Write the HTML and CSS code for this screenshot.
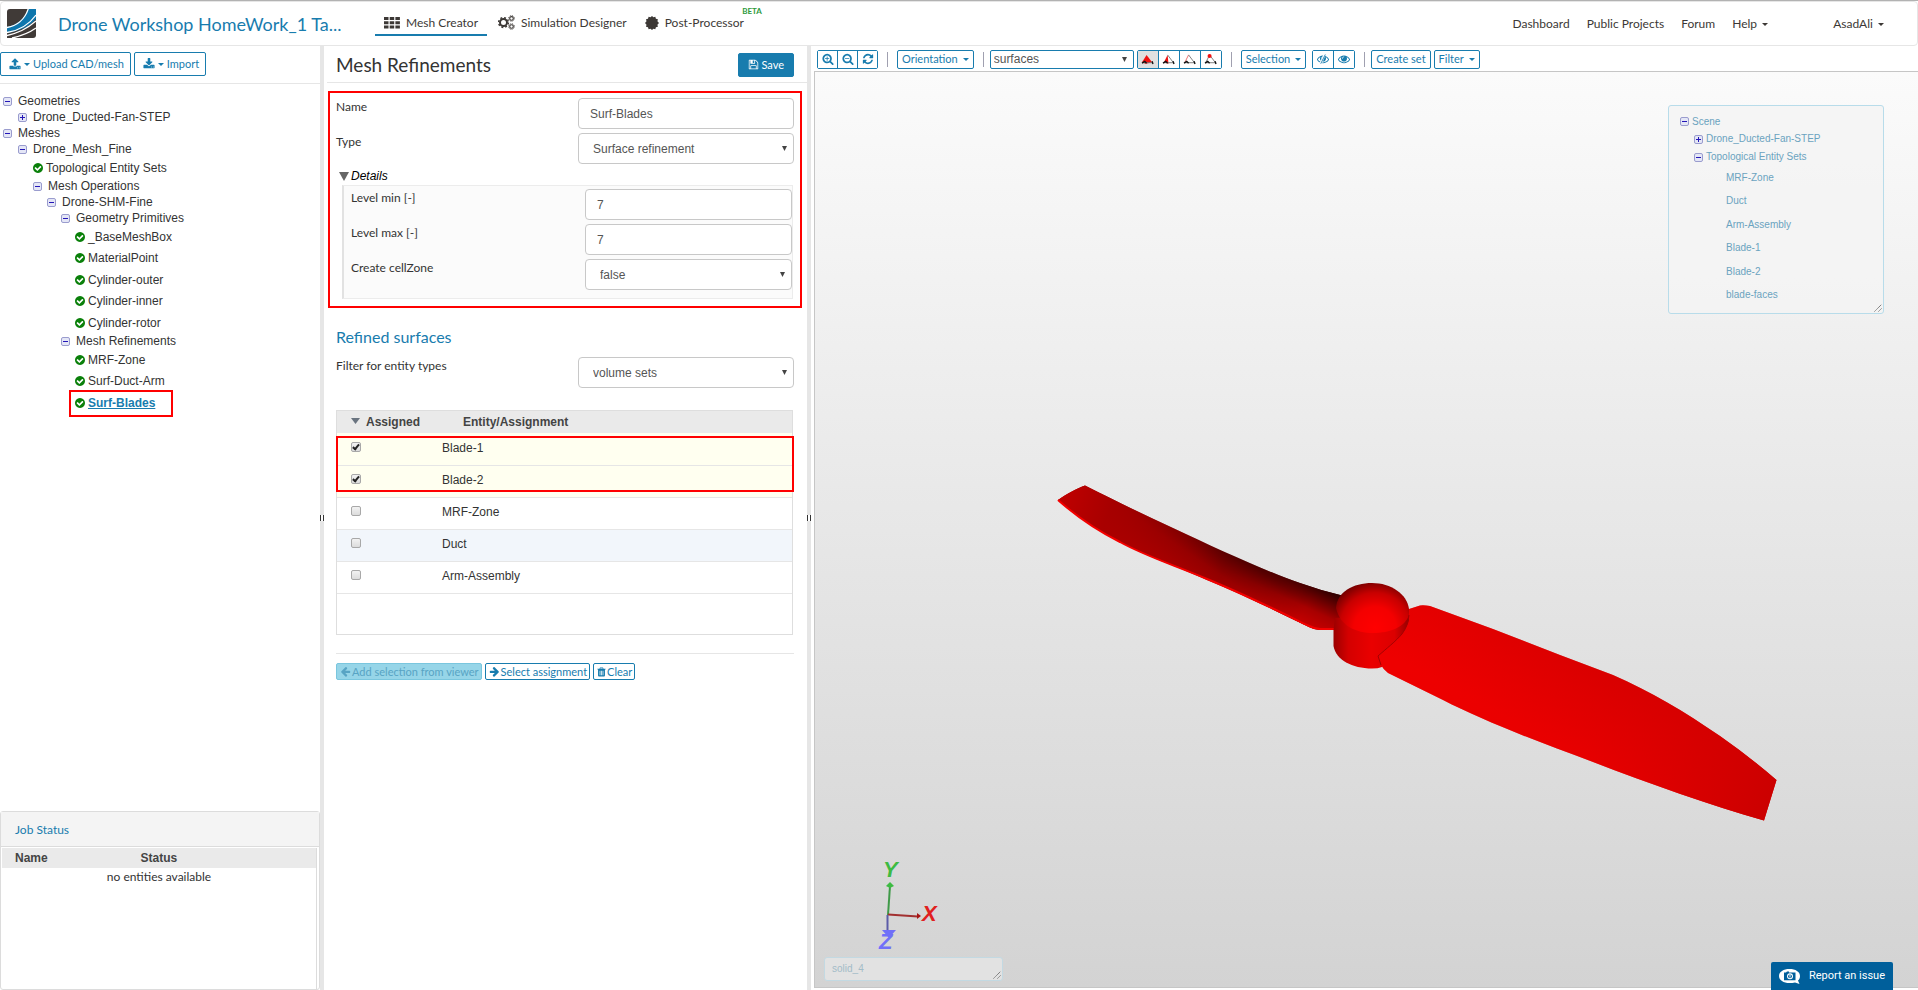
FILE: index.html
```
<!DOCTYPE html>
<html lang="en">
<head>
<meta charset="utf-8">
<title>Drone Workshop HomeWork_1 - Mesh Creator</title>
<link rel="stylesheet" href="styles.css">
</head>
<body>
<svg class="defs" aria-hidden="true">
  <defs>
    <symbol id="i-upload" viewBox="0 0 1792 1792"><path d="M1344 1472q0-26-19-45t-45-19-45 19-19 45 19 45 45 19 45-19 19-45zm256 0q0-26-19-45t-45-19-45 19-19 45 19 45 45 19 45-19 19-45zm128-224v320q0 40-28 68t-68 28h-1472q-40 0-68-28t-28-68v-320q0-40 28-68t68-28h427q21 56 70.5 92t110.5 36h256q61 0 110.5-36t70.5-92h427q40 0 68 28t28 68zm-325-648q-17 40-59 40h-256v448q0 26-19 45t-45 19h-256q-26 0-45-19t-19-45v-448h-256q-42 0-59-40-17-39 14-69l448-448q18-19 45-19t45 19l448 448q31 30 14 69z"/></symbol>
    <symbol id="i-download" viewBox="0 0 1792 1792"><path d="M1344 1344q0-26-19-45t-45-19-45 19-19 45 19 45 45 19 45-19 19-45zm256 0q0-26-19-45t-45-19-45 19-19 45 19 45 45 19 45-19 19-45zm128-224v320q0 40-28 68t-68 28h-1472q-40 0-68-28t-28-68v-320q0-40 28-68t68-28h465l135 136q58 56 136 56t136-56l136-136h464q40 0 68 28t28 68zm-325-569q17 41-14 70l-448 448q-18 19-45 19t-45-19l-448-448q-31-29-14-70 17-39 59-39h256v-448q0-26 19-45t45-19h256q26 0 45 19t19 45v448h256q42 0 59 39z"/></symbol>
    <symbol id="i-save" viewBox="0 0 1792 1792"><path d="M512 1536h768v-384h-768v384zm896 0h128v-896q0-14-10-38.5t-20-34.5l-281-281q-10-10-34-20t-39-10v416q0 40-28 68t-68 28h-576q-40 0-68-28t-28-68v-416h-128v1280h128v-416q0-40 28-68t68-28h832q40 0 68 28t28 68v416zm-384-928v-320q0-13-9.5-22.5t-22.5-9.5h-192q-13 0-22.5 9.5t-9.5 22.5v320q0 13 9.5 22.5t22.5 9.5h192q13 0 22.5-9.5t9.5-22.5zm640 32v928q0 40-28 68t-68 28h-1344q-40 0-68-28t-28-68v-1344q0-40 28-68t68-28h928q40 0 88 20t76 48l280 280q28 28 48 76t20 88z"/></symbol>
    <symbol id="i-check" viewBox="128 128 1536 1536"><path d="M1412 734q0-28-18-46l-91-90q-19-19-45-19t-45 19l-408 407-226-226q-19-19-45-19t-45 19l-91 90q-18 18-18 46 0 27 18 45l362 362q19 19 45 19 27 0 46-19l543-543q18-18 18-45zm252 162q0 209-103 385.5t-279.5 279.5-385.5 103-385.5-103-279.5-279.5-103-385.5 103-385.5 279.5-279.5 385.5-103 385.5 103 279.5 279.5 103 385.5z"/></symbol>
    <symbol id="i-arrow" viewBox="0 0 1792 1792"><path d="M1600 960q0 54-37 91l-651 651q-39 37-91 37-51 0-90-37l-75-75q-38-38-38-91t38-91l293-293h-704q-52 0-84.5-37.5t-32.5-90.5v-128q0-53 32.5-90.5t84.5-37.5h704l-293-294q-38-36-38-90t38-90l75-75q38-38 90-38 53 0 91 38l651 651q37 35 37 90z"/></symbol>
    <symbol id="i-trash" viewBox="0 0 12 12"><path fill-rule="evenodd" d="M4 0h4l.7 1.6H11.5v1.1H10.6V10.6a1.3 1.3 0 0 1-1.3 1.4H2.7A1.3 1.3 0 0 1 1.4 10.6V2.7H.5V1.6H3.3zM4.3 1.6h3.400L7.400.9H4.600zM3.500 4.200v6h1v-6zM5.500 4.200v6h1v-6zM7.500 4.200v6h1v-6z"/></symbol>
    <symbol id="i-zoom-in" viewBox="0 0 1792 1792"><path d="M1088 800v64q0 13-9.5 22.5t-22.5 9.500h-224v224q0 13-9.500 22.500t-22.500 9.500h-64q-13 0-22.500-9.500t-9.500-22.500v-224h-224q-13 0-22.500-9.500t-9.500-22.500v-64q0-13 9.500-22.500t22.500-9.500h224v-224q0-13 9.500-22.500t22.500-9.500h64q13 0 22.500 9.500t9.500 22.500v224h224q13 0 22.500 9.500t9.500 22.500zm128 32q0-185-131.500-316.500t-316.500-131.500-316.500 131.500-131.500 316.500 131.500 316.500 316.500 131.500 316.500-131.500 131.500-316.500zm512 832q0 53-37.500 90.500t-90.500 37.500q-54 0-90-38l-343-342q-179 124-399 124-143 0-273.500-55.500t-225-150-150-225-55.500-273.500 55.500-273.500 150-225 225-150 273.500-55.500 273.500 55.500 225 150 150 225 55.500 273.500q0 220-124 399l343 343q37 37 37 90z"/></symbol>
    <symbol id="i-zoom-out" viewBox="0 0 1792 1792"><path d="M1088 800v64q0 13-9.500 22.500t-22.500 9.500h-576q-13 0-22.500-9.500t-9.500-22.500v-64q0-13 9.500-22.500t22.500-9.500h576q13 0 22.500 9.500t9.500 22.500zm128 32q0-185-131.500-316.500t-316.500-131.500-316.500 131.500-131.500 316.500 131.500 316.500 316.500 131.500 316.500-131.500 131.500-316.500zm512 832q0 53-37.500 90.500t-90.500 37.500q-54 0-90-38l-343-342q-179 124-399 124-143 0-273.500-55.500t-225-150-150-225-55.500-273.500 55.500-273.500 150-225 225-150 273.500-55.500 273.500 55.500 225 150 150 225 55.500 273.500q0 220-124 399l343 343q37 37 37 90z"/></symbol>
    <symbol id="i-refresh" viewBox="0 0 1792 1792"><path d="M1639 1056q0 5-1 7-64 268-268 434.500t-478 166.500q-146 0-282.500-55t-243.500-157l-129 129q-19 19-45 19t-45-19-19-45v-448q0-26 19-45t45-19h448q26 0 45 19t19 45-19 45l-137 137q71 66 161 102t187 36q134 0 250-65t186-179q11-17 53-117 8-23 30-23h192q13 0 22.500 9.500t9.500 22.500zm25-800v448q0 26-19 45t-45 19h-448q-26 0-45-19t-19-45 19-45l138-138q-148-137-349-137-134 0-250 65t-186 179q-11 17-53 117-8 23-30 23h-199q-13 0-22.500-9.500t-9.500-22.500v-7q65-268 270-434.500t480-166.500q146 0 284 55.500t245 156.500l130-129q19-19 45-19t45 19 19 45z"/></symbol>
    <symbol id="i-eye" viewBox="0 0 1792 1792"><path d="M1664 960q-152-236-381-353 61 104 61 225 0 185-131.500 316.500t-316.500 131.500-316.500-131.500-131.500-316.500q0-121 61-225-229 117-381 353 133 205 333.500 326.500t434.500 121.500 434.500-121.500 333.500-326.500zm-720-384q0-20-14-34t-34-14q-125 0-214.500 89.500t-89.500 214.500q0 20 14 34t34 14 34-14 14-34q0-86 61-147t147-61q20 0 34-14t14-34zm848 384q0 34-20 69-140 230-376.500 368.500t-499.500 138.500-499.500-139-376.500-368q-20-35-20-69t20-69q140-229 376.500-368t499.500-139 499.500 139 376.500 368q20 35 20 69z"/></symbol>
    <symbol id="i-eye-off" viewBox="0 0 1792 1792"><use href="#i-eye" width="1792" height="1792"/><path d="M1180 150L520 1640" stroke="#fff" stroke-width="340" fill="none"/><path d="M1240 220L560 1600" stroke="currentColor" stroke-width="130" fill="none"/></symbol>
    <symbol id="i-minus" viewBox="0 0 9 9"><rect x=".5" y=".5" width="8" height="8" rx="1.500" fill="#e4e6f6" stroke="#9a9cce"/><path d="M2 4.500h5" stroke="#2416b8"/></symbol>
    <symbol id="i-plus" viewBox="0 0 9 9"><rect x=".5" y=".5" width="8" height="8" rx="1.500" fill="#e4e6f6" stroke="#9a9cce"/><path d="M2 4.500h5M4.500 2v5" stroke="#2416b8"/></symbol>
    <symbol id="i-caret" viewBox="0 0 6 3"><path d="M0 0h6L3 3z"/></symbol>
    <symbol id="i-drop" viewBox="0 0 6 5" preserveAspectRatio="none"><path d="M0 0h6L3 5z"/></symbol>
    <symbol id="i-grip" viewBox="0 0 8 8"><path d="M.5 7.500l7-7M4.500 7.500l3-3" stroke="#6a6a6a" stroke-dasharray="1.200 .4" fill="none"/></symbol>
    <symbol id="i-tetra" viewBox="0 0 14 12"><path d="M1.500 9.500h11" stroke="#777" stroke-width="1"/><path d="M1 10l3-2 2 2M12 8l1 3" stroke="#111" stroke-width="1.500" fill="none"/></symbol>
  </defs>
</svg>

<header class="topbar">
  <svg class="logo" viewBox="0 0 29 29">
    <defs><clipPath id="logo-clip"><path d="M3 0h26v26a3 3 0 0 1-3 3H0V3a3 3 0 0 1 3-3z"/></clipPath></defs>
    <g clip-path="url(#logo-clip)">
      <rect width="29" height="29" fill="#403a37"/>
      <path d="M0 18C9 16 17 11 21 0H29V10C22 18 12 22 0 24z" fill="#0d76ad"/>
      <path d="M0 18.500C9 17 18 11 21.500-1M0 23.500C12 21.500 22 16 29 6M0 26.500C12 24 20 20 29 12M5 29C14 27 22 24 29 19" stroke="#fff" stroke-width="1.300" fill="none"/>
    </g>
  </svg>
  <h1 class="project">Drone Workshop HomeWork_1 Ta...</h1>
  <nav class="tabs" aria-label="Workbench">
    <a class="tab active" href="#mesh">
      <svg class="ic-tab" viewBox="0 0 16 12"><path d="M0 0h4.500v3H0zM5.700 0h4.500v3H5.700zM11.400 0h4.500v3h-4.500zM0 4.300h4.500v3H0zM5.700 4.300h4.500v3H5.700zM11.400 4.300h4.500v3h-4.500zM0 8.600h4.500v3H0zM5.700 8.600h4.500v3H5.700zM11.400 8.600h4.500v3h-4.500z"/></svg>
      Mesh Creator</a>
    <a class="tab" href="#simulation">
      <svg class="ic-gears" viewBox="0 0 17 15"><g class="cog"><circle cx="5.500" cy="7.500" r="3.500" stroke-width="2"/><circle cx="5.500" cy="7.500" r="4.900" stroke-width="1.500" stroke-dasharray="1.925 1.925"/><circle cx="13.500" cy="3.400" r="1.800" stroke-width="1.100"/><circle cx="13.500" cy="3.400" r="2.800" stroke-width="1" stroke-dasharray="1.100 1.100"/><circle cx="13.500" cy="11.500" r="1.800" stroke-width="1.100"/><circle cx="13.500" cy="11.500" r="2.800" stroke-width="1" stroke-dasharray="1.100 1.100"/></g></svg>
      Simulation Designer</a>
    <a class="tab" href="#post">
      <svg class="ic-cert" viewBox="0 0 14 14"><path d="M7 0l1.400 1.300L10.300.7l.6 2 2 .6-.5 1.900L14 7l-1.600 1.700.5 2-2 .6-.6 2-1.900-.6L7 14l-1.500-1.300-1.900.6-.6-2-2-.6.500-2L0 7l1.500-1.800-.5-1.900 2-.6.600-2 1.900.600z"/></svg>
      Post-Processor<span class="beta">BETA</span></a>
  </nav>
  <nav class="links" aria-label="Site">
    <a href="#dashboard">Dashboard</a>
    <a href="#public">Public Projects</a>
    <a href="#forum">Forum</a>
    <a href="#help">Help <svg class="caret"><use href="#i-caret"/></svg></a>
    <a class="user" href="#user">AsadAli <svg class="caret"><use href="#i-caret"/></svg></a>
  </nav>
</header>

<div class="workspace">
  <aside class="sidebar">
    <div class="side-actions">
      <button class="btn" type="button"><svg class="ic"><use href="#i-upload"/></svg><svg class="caret"><use href="#i-caret"/></svg>Upload CAD/mesh</button>
      <button class="btn" type="button"><svg class="ic"><use href="#i-download"/></svg><svg class="caret"><use href="#i-caret"/></svg>Import</button>
    </div>
    <ul class="tree">
      <li><div class="node"><svg class="tog"><use href="#i-minus"/></svg>Geometries</div>
        <ul><li><div class="node"><svg class="tog"><use href="#i-plus"/></svg>Drone_Ducted-Fan-STEP</div></li></ul></li>
      <li><div class="node"><svg class="tog"><use href="#i-minus"/></svg>Meshes</div>
        <ul><li><div class="node"><svg class="tog"><use href="#i-minus"/></svg>Drone_Mesh_Fine</div>
          <ul>
            <li class="leaf"><svg class="ok"><use href="#i-check"/></svg>Topological Entity Sets</li>
            <li><div class="node"><svg class="tog"><use href="#i-minus"/></svg>Mesh Operations</div>
              <ul><li><div class="node"><svg class="tog"><use href="#i-minus"/></svg>Drone-SHM-Fine</div>
                <ul>
                  <li><div class="node"><svg class="tog"><use href="#i-minus"/></svg>Geometry Primitives</div>
                    <ul>
                      <li class="leaf"><svg class="ok"><use href="#i-check"/></svg>_BaseMeshBox</li>
                      <li class="leaf"><svg class="ok"><use href="#i-check"/></svg>MaterialPoint</li>
                      <li class="leaf"><svg class="ok"><use href="#i-check"/></svg>Cylinder-outer</li>
                      <li class="leaf"><svg class="ok"><use href="#i-check"/></svg>Cylinder-inner</li>
                      <li class="leaf"><svg class="ok"><use href="#i-check"/></svg>Cylinder-rotor</li>
                    </ul></li>
                  <li><div class="node"><svg class="tog"><use href="#i-minus"/></svg>Mesh Refinements</div>
                    <ul>
                      <li class="leaf"><svg class="ok"><use href="#i-check"/></svg>MRF-Zone</li>
                      <li class="leaf"><svg class="ok"><use href="#i-check"/></svg>Surf-Duct-Arm</li>
                      <li class="leaf marked"><svg class="ok"><use href="#i-check"/></svg><a href="#surf-blades">Surf-Blades</a></li>
                    </ul></li>
                </ul></li></ul></li>
          </ul></li></ul></li>
    </ul>
    <section class="jobs">
      <h2>Job Status</h2>
      <div class="jobs-body">
        <table>
          <thead><tr><th>Name</th><th>Status</th></tr></thead>
          <tbody><tr><td colspan="2">no entities available</td></tr></tbody>
        </table>
      </div>
    </section>
  </aside>

  <div class="splitter"><span></span></div>

  <main class="props">
    <div class="props-head">
      <h2>Mesh Refinements</h2>
      <button class="btn primary" type="button"><svg class="ic-s"><use href="#i-save"/></svg>Save</button>
    </div>
    <form class="framed">
      <div class="field"><label for="name">Name</label><input id="name" type="text" value="Surf-Blades"></div>
      <div class="field"><label for="type">Type</label><span class="sel"><select id="type"><option>Surface refinement</option></select><svg class="drop"><use href="#i-drop"/></svg></span></div>
      <div class="details-title"><svg viewBox="0 0 10 9"><path d="M0 0h10L5 9z"/></svg>Details</div>
      <div class="details">
        <div class="field"><label for="lmin">Level min [-]</label><input id="lmin" type="text" value="7"></div>
        <div class="field"><label for="lmax">Level max [-]</label><input id="lmax" type="text" value="7"></div>
        <div class="field"><label for="cz">Create cellZone</label><span class="sel"><select id="cz"><option>false</option></select><svg class="drop"><use href="#i-drop"/></svg></span></div>
      </div>
    </form>
    <section class="surfaces">
      <h3>Refined surfaces</h3>
      <div class="field"><label for="filter">Filter for entity types</label><span class="sel"><select id="filter"><option>volume sets</option></select><svg class="drop"><use href="#i-drop"/></svg></span></div>
      <div class="grid">
        <table>
          <thead><tr><th><svg class="sort"><use href="#i-drop"/></svg>Assigned</th><th>Entity/Assignment</th></tr></thead>
          <tbody>
            <tr class="on"><td><input type="checkbox" checked aria-label="Assign Blade-1"></td><td>Blade-1</td></tr>
            <tr class="on"><td><input type="checkbox" checked aria-label="Assign Blade-2"></td><td>Blade-2</td></tr>
            <tr><td><input type="checkbox" aria-label="Assign MRF-Zone"></td><td>MRF-Zone</td></tr>
            <tr class="alt"><td><input type="checkbox" aria-label="Assign Duct"></td><td>Duct</td></tr>
            <tr><td><input type="checkbox" aria-label="Assign Arm-Assembly"></td><td>Arm-Assembly</td></tr>
          </tbody>
        </table>
        <div class="grid-mark"></div>
      </div>
      <div class="assign">
        <button class="btn small" type="button" disabled><svg class="ic-s flip"><use href="#i-arrow"/></svg>Add selection from viewer</button>
        <button class="btn small" type="button"><svg class="ic-s"><use href="#i-arrow"/></svg>Select assignment</button>
        <button class="btn small" type="button"><svg class="ic-t"><use href="#i-trash"/></svg>Clear</button>
      </div>
    </section>
  </main>

  <div class="splitter"><span></span></div>

  <section class="view">
    <div class="toolbar">
      <div class="group">
        <button type="button" aria-label="Zoom in"><svg class="ic"><use href="#i-zoom-in"/></svg></button>
        <button type="button" aria-label="Zoom out"><svg class="ic"><use href="#i-zoom-out"/></svg></button>
        <button type="button" aria-label="Refresh"><svg class="ic"><use href="#i-refresh"/></svg></button>
      </div>
      <i class="sep"></i>
      <button class="btn tool" type="button">Orientation<svg class="caret"><use href="#i-caret"/></svg></button>
      <i class="sep tight"></i>
      <span class="sel mode"><select aria-label="Render mode"><option>surfaces</option></select><svg class="drop"><use href="#i-drop"/></svg></span>
      <div class="group picks">
        <button class="pressed" type="button" aria-label="Pick volumes"><svg class="tet" viewBox="0 0 14 12"><path d="M6 1l6 8-7 1.500L1 9z" fill="#f01010"/><use href="#i-tetra" width="14" height="12"/></svg></button>
        <button type="button" aria-label="Pick faces"><svg class="tet" viewBox="0 0 14 12"><path d="M6 1l1 9.500L2 9z" fill="#f01010"/><path d="M6 1l6 8" stroke="#777"/><use href="#i-tetra" width="14" height="12"/></svg></button>
        <button type="button" aria-label="Pick edges"><svg class="tet" viewBox="0 0 14 12"><path d="M6 1L2 9" stroke="#e66"/><path d="M6 1l6 8" stroke="#777"/><use href="#i-tetra" width="14" height="12"/></svg></button>
        <button type="button" aria-label="Pick nodes"><svg class="tet" viewBox="0 0 14 12"><path d="M6 1L2 9M6 1l6 8" stroke="#777" fill="none"/><use href="#i-tetra" width="14" height="12"/><circle cx="6" cy="2.200" r="2.200" fill="#f01010"/></svg></button>
      </div>
      <i class="sep"></i>
      <button class="btn tool" type="button">Selection<svg class="caret"><use href="#i-caret"/></svg></button>
      <div class="group eyes">
        <button type="button" aria-label="Hide"><svg class="ic"><use href="#i-eye-off"/></svg></button>
        <button type="button" aria-label="Show"><svg class="ic"><use href="#i-eye"/></svg></button>
      </div>
      <i class="sep tight"></i>
      <button class="btn tool" type="button">Create set</button>
      <button class="btn tool last" type="button">Filter<svg class="caret"><use href="#i-caret"/></svg></button>
    </div>

    <div class="canvas">
      <svg class="scene" viewBox="815 72 1103 915" preserveAspectRatio="xMidYMid meet">
        <defs>
          <path id="blade" d="M1058 500C1068 493 1076 489 1085 485.500C1112 499 1142 514 1173 528C1216 548 1265 571 1300 583Q1322 591 1344 596L1342 630H1320Q1315 630 1309 627C1280 613 1246 596 1207 580C1174 565 1145 556 1120 542C1096 530 1076 516 1058 500z"/>
          <path id="blade-near" d="M1409 609L1420 605.500Q1424 605 1430 606L1493 629L1560 655L1613 675C1650 691 1685 712 1720 736Q1750 757 1776.500 780L1764 820.500C1710 805 1650 784 1593 762C1530 739 1480 719 1443 700L1388 673Q1383 669 1381 665L1378 656C1386 649 1396 641 1402 634Q1408 626 1409 620z"/>
          <linearGradient id="g-left" gradientUnits="userSpaceOnUse" x1="1228" y1="548" x2="1198" y2="592"><stop offset="0" stop-color="#4c0000"/><stop offset=".5" stop-color="#920000"/><stop offset="1" stop-color="#b00000"/></linearGradient>
          <linearGradient id="g-tip" gradientUnits="userSpaceOnUse" x1="1060" y1="495" x2="1220" y2="560"><stop offset="0" stop-color="#c00000"/><stop offset=".3" stop-color="#a80000" stop-opacity=".9"/><stop offset="1" stop-color="#a00000" stop-opacity="0"/></linearGradient>
          <linearGradient id="g-root" gradientUnits="userSpaceOnUse" x1="1322" y1="588" x2="1305" y2="625"><stop offset="0" stop-color="#300000"/><stop offset=".6" stop-color="#a80000"/><stop offset="1" stop-color="#c60000"/></linearGradient>
          <linearGradient id="g-fade" gradientUnits="userSpaceOnUse" x1="1225" y1="560" x2="1310" y2="595"><stop offset="0" stop-color="#000"/><stop offset="1" stop-color="#fff"/></linearGradient>
          <mask id="m-root" maskUnits="userSpaceOnUse" x="1040" y="470" width="320" height="180"><rect x="1040" y="470" width="320" height="180" fill="url(#g-fade)"/></mask>
          <linearGradient id="g-right" gradientUnits="userSpaceOnUse" x1="1600" y1="668" x2="1560" y2="745"><stop offset="0" stop-color="#d20000"/><stop offset="1" stop-color="#ea0000"/></linearGradient>
          <linearGradient id="g-right2" gradientUnits="userSpaceOnUse" x1="1420" y1="640" x2="1780" y2="800"><stop offset="0" stop-color="#f40000" stop-opacity=".4"/><stop offset=".5" stop-color="#e20000" stop-opacity=".4"/><stop offset="1" stop-color="#ca0000"/></linearGradient>
          <radialGradient id="g-dome" gradientUnits="userSpaceOnUse" cx="1375" cy="628" r="47"><stop offset="0" stop-color="#ff0000"/><stop offset=".45" stop-color="#f40000"/><stop offset=".75" stop-color="#c80000"/><stop offset="1" stop-color="#780000"/></radialGradient>
          <linearGradient id="g-cyl" gradientUnits="userSpaceOnUse" x1="1333" y1="0" x2="1410" y2="0"><stop offset="0" stop-color="#9a0000"/><stop offset=".2" stop-color="#d40000"/><stop offset=".5" stop-color="#ea0000"/><stop offset=".8" stop-color="#dc0000"/><stop offset="1" stop-color="#900000"/></linearGradient>
        </defs>
        <use href="#blade" fill="url(#g-left)"/>
        <use href="#blade" fill="url(#g-tip)"/>
        <use href="#blade" fill="url(#g-root)" mask="url(#m-root)"/>
        <path d="M1058 500C1076 516 1096 530 1120 542C1145 556 1174 565 1207 579C1246 595 1280 612 1309 626Q1315 629 1320 629H1340" fill="none" stroke="#f40000" stroke-width="2"/>
        <path d="M1335 618L1333.500 630V646C1336 660 1352 668.500 1372 668.500Q1378 668.500 1382 667L1409 630V612z" fill="url(#g-cyl)"/>
        <path d="M1336 608C1337 592 1353 583 1372 583S1407 594 1409 609V615C1405 627 1390 633 1373 633S1340 626 1336 608z" fill="url(#g-dome)"/>
        <use href="#blade-near" fill="url(#g-right)"/>
        <use href="#blade-near" fill="url(#g-right2)"/>
        <path d="M1409 615Q1408 626 1402 634C1396 641 1386 649 1378 656L1381 665" fill="none" stroke="#a40000" stroke-width="1"/>
        <g class="axis">
          <path d="M888 915L890 886" stroke="#3f9a48" stroke-width="2"/><path d="M886 886l4-4 4 4-4 2z" fill="#3dbb42"/>
          <path d="M888 914.500L918 916.500" stroke="#a23030" stroke-width="2"/><path d="M917 913l4 3-4 3z" fill="#a81414"/>
          <path d="M887.500 915V931" stroke="#5c5ca8" stroke-width="2"/><path d="M882 930h14l-7 8z" fill="#7070f8"/>
          <text x="883" y="877" fill="#3dbb42">Y</text>
          <text x="922" y="921" fill="#e02020">X</text>
          <text x="879" y="949" fill="#7070f8">Z</text>
        </g>
      </svg>
      <div class="scene-tree">
        <div class="s0"><svg class="tog"><use href="#i-minus"/></svg>Scene</div>
        <div class="s1"><svg class="tog"><use href="#i-plus"/></svg>Drone_Ducted-Fan-STEP</div>
        <div class="s1"><svg class="tog"><use href="#i-minus"/></svg>Topological Entity Sets</div>
        <ul>
          <li>MRF-Zone</li><li>Duct</li><li>Arm-Assembly</li><li>Blade-1</li><li>Blade-2</li><li>blade-faces</li>
        </ul>
        <svg class="grip"><use href="#i-grip"/></svg>
      </div>
      <div class="solid">solid_4<svg class="grip"><use href="#i-grip"/></svg></div>
    </div>
    <button class="report" type="button">
      <svg viewBox="0 0 21 15"><path d="M10.500 0C16.500 0 21 2.700 21 7c0 2-.8 3.500-2 4.600L20.500 15 16 13.400c-1.700.500-3.500.600-5.500.600C4.500 14 0 11.300 0 7S4.500 0 10.500 0z" fill="#fff"/><path d="M5 3.500h2l1-1h2v1h6.500v7.800H5z" fill="#005f9b"/><circle cx="11" cy="7.300" r="3" fill="#fff"/><circle cx="11" cy="7.300" r="1.900" fill="#005f9b"/><path d="M10.500 6h1v2.600h-1z" fill="#fff"/></svg>
      Report an issue</button>
  </section>
</div>
</body>
</html>
```

FILE: styles.css
```
*, *::before, *::after { box-sizing: border-box; }

:root {
  --blue: #187cae;
  --ink: #3c3835;
  --line: #e6e6e6;
  --sans: "Liberation Sans", Arial, sans-serif;
  --lato: Lato, "Liberation Sans", sans-serif;
}

body {
  margin: 0;
  height: 100vh;
  display: flex;
  flex-direction: column;
  overflow: hidden;
  border-top: 1px solid #b2b2b2;
  background: #fff;
  color: #333;
  font: 12px/16px var(--lato);
}

ul { list-style: none; margin: 0; padding: 0; }
h1, h2, h3 { margin: 0; font-weight: 400; }
a { color: inherit; text-decoration: none; }
button, input, select { font: inherit; margin: 0; }
svg { display: block; fill: currentColor; flex: none; }
.defs { position: absolute; width: 0; height: 0; }
.ic { width: 12px; height: 12px; }
.ic-s { width: 11px; height: 11px; }
.ic-t { width: 9px; height: 10px; }
.flip { transform: scaleX(-1); }
.caret { display: inline-block; width: 6px; height: 3px; }

/* Top bar */
.topbar {
  flex: none;
  display: flex;
  align-items: center;
  height: 45px;
  padding: 0 33px 0 6px;
  border: 1px solid var(--line);
  border-radius: 4px;
}
.logo { width: 29px; height: 29px; }
.project { margin-left: 22px; width: 317px; color: var(--blue); font-size: 18px; line-height: 24px; white-space: nowrap; }
.tabs { display: flex; gap: 2px; }
.tab {
  position: relative;
  display: flex;
  align-items: center;
  gap: 6px;
  height: 24px;
  padding: 0 9px;
  border-bottom: 2px solid transparent;
  color: var(--ink);
  white-space: nowrap;
}
.tab.active { border-color: var(--blue); }
.tab:last-child { padding: 0 18px 0 7px; }
.ic-tab { width: 16px; height: 12px; }
.ic-gears { width: 17px; height: 15px; }
.cog { fill: none; stroke: var(--ink); }
.ic-cert { width: 14px; height: 14px; }
.beta { position: absolute; right: 0; top: -9px; color: #2d9a3c; font: bold 8px/16px var(--lato); }
.links { display: flex; gap: 17px; margin-left: auto; color: var(--ink); white-space: nowrap; }
.links .caret { vertical-align: middle; margin-left: 2px; }
.user { margin-left: 48px; }

/* Columns */
.workspace { flex: 1; min-height: 0; display: flex; }
.splitter { flex: none; width: 4px; display: flex; align-items: center; background: var(--line); }
.splitter span { width: 4px; height: 6px; border: solid #333; border-width: 0 1px; background: #fff; }

.sidebar { flex: 0 0 320px; display: flex; flex-direction: column; }
.side-actions { display: flex; gap: 3px; padding: 6px 0 7px; border-bottom: 1px solid var(--line); }
.btn {
  display: flex;
  align-items: center;
  justify-content: center;
  gap: 3px;
  height: 24px;
  padding: 0 9px;
  border: 1px solid var(--blue);
  border-radius: 2px;
  background: #fff;
  color: var(--blue);
  font-size: 11px;
  line-height: 16px;
  white-space: nowrap;
}
.side-actions .btn { padding: 0 6px 0 8px; }
.btn.primary { background: var(--blue); color: #fff; gap: 2px; }

/* Project tree */
.tree { flex: 1; padding: 9px 0 0 3px; font: 12px/16px var(--sans); }
.tree ul { padding-left: 15px; }
.tree ul ul ul { padding-left: 14px; }
.node { display: flex; align-items: center; gap: 6px; height: 16px; }
.tog { width: 9px; height: 9px; }
.leaf { display: flex; align-items: center; gap: 3px; height: 21px; }
.leaf:nth-child(even) { height: 22px; }
.ok { width: 10px; height: 10px; color: #0a800a; }
.marked { position: relative; }
.marked a { color: var(--blue); font-weight: bold; text-decoration: underline; }
.marked::after { content: ""; position: absolute; left: -6px; top: -2px; width: 104px; height: 27px; border: 2px solid red; }

/* Job status */
.jobs { flex: none; display: flex; flex-direction: column; height: 179px; border: 1px solid #dcdcdc; border-radius: 3px; }
.jobs h2 { padding: 10px 14px 8px; border-bottom: 1px solid #dcdcdc; background: #f4f4f4; color: var(--blue); font-size: 12px; line-height: 16px; }
.jobs-body { flex: 1; margin: 1px 2px 0 1px; border-right: 1px solid #dcdcdc; }
.jobs table { width: 100%; border-collapse: collapse; }
.jobs th { height: 20px; padding: 0 13px; background: #eaeaea; color: #444; font: bold 12px/16px var(--sans); text-align: left; }
.jobs th:first-child { width: 40%; }
.jobs td { padding: 1px 0; text-align: center; }

/* Properties */
.props { flex: 0 0 483px; }
.props-head { display: flex; align-items: center; justify-content: space-between; height: 37px; margin-left: 3px; padding: 1px 13px 0 9px; border-bottom: 1px solid var(--line); }
.props-head h2 { font-size: 19px; line-height: 24px; }
.framed { margin: 8px 5px 0 4px; padding: 5px 6px 7px; border: 2px solid red; }
.field { display: flex; justify-content: space-between; margin-bottom: 4px; }
.field > label { padding-top: 1px; }
.field > input, .field > .sel { flex: none; width: 216px; }
.field > input, .sel select {
  height: 31px;
  padding: 0 11px;
  border: 1px solid #c8c8c8;
  border-radius: 4px;
  background: #fff;
  color: #555;
  font: 12px/16px var(--sans);
}
.sel { position: relative; display: block; }
.sel select { appearance: none; width: 100%; padding: 0 14px; }
.drop { position: absolute; right: 7px; top: 13px; width: 5px; height: 5px; color: #444; pointer-events: none; }
.details-title { display: flex; align-items: center; gap: 2px; padding: 0 0 1px 3px; color: #000; font: italic 12px/16px var(--sans); }
.details-title svg { width: 10px; height: 9px; color: #666; }
.details { margin: 0 1px 0 6px; padding: 3px 0 4px; border: 1px solid #ececec; border-left: 2px solid #e2e2e2; background: #fbfbfb; }
.details .field { padding-left: 7px; }
.details .field > input, .details .field > .sel { width: 207px; }

.surfaces { padding: 19px 13px 0 12px; }
.surfaces h3 { color: var(--blue); font-size: 16px; line-height: 20px; margin-bottom: 10px; }
.surfaces .field { margin-bottom: 22px; }
.grid { position: relative; height: 225px; margin-right: 1px; border: 1px solid #dedede; }
.grid table { width: 100%; border-collapse: collapse; font: 12px/16px var(--sans); }
.grid th { height: 22px; padding: 0 14px; background: #eaeaea; color: #444; text-align: left; white-space: nowrap; }
.grid th:first-child { width: 98px; }
.grid th + th { padding-left: 28px; }
.sort { display: inline-block; width: 9px; height: 6px; margin-right: 6px; vertical-align: 2px; color: #6a7480; }
.grid td { height: 32px; padding: 0 7px 2px; border-bottom: 1px solid var(--line); }
.grid td:first-child { padding: 0 14px 4px; }
.on { background: #fffff0; }
.alt { background: #f2f6fb; }
.grid input {
  appearance: none;
  display: block;
  width: 10px;
  height: 10px;
  border: 1px solid #a8a8a8;
  border-radius: 2px;
  background: linear-gradient(#f2f2f2, #dcdcdc);
  position: relative;
}
.grid input:checked::after { content: ""; position: absolute; left: 2px; top: 0; width: 4px; height: 7px; border: solid #222; border-width: 0 2px 2px 0; transform: rotate(40deg); }
.grid-mark { position: absolute; left: -1px; right: -2px; top: 25px; height: 56px; border: 2px solid red; }
.assign { display: flex; gap: 3px; margin-top: 18px; padding-top: 9px; border-top: 1px solid var(--line); }
.btn.small { height: 17px; padding: 0 2px 0 3px; gap: 1px; }
.btn:disabled { background: #96d5e8; border-color: #7ac6de; color: #58a4c4; }

/* Viewer */
.view { flex: 1; min-width: 0; display: flex; flex-direction: column; padding-left: 3px; position: relative; }
.toolbar { flex: none; display: flex; align-items: center; height: 25px; padding: 1px 0 0 3px; }
.group { display: flex; height: 19px; border: 1px solid var(--blue); border-radius: 2px; color: var(--blue); }
.group button { display: flex; align-items: center; justify-content: center; width: 19px; padding: 0; border: 0; background: #fff; color: inherit; }
.group button + button { width: 20px; border-left: 1px solid var(--blue); }
.group .pressed { background: #e0e0e0; }
.picks button, .eyes button { width: 20px; }
.picks button + button, .eyes button + button { width: 21px; }
.tet { width: 13px; height: 11px; fill: none; }
.eyes { margin-left: 6px; }
.sep { flex: none; width: 1px; height: 15px; margin: 0 9px; background: #a0a0b0; }
.sep.tight { margin-right: 6px; }
.btn.tool { height: 19px; padding: 0 4px; gap: 5px; }
.btn.tool + .last { margin-left: 3px; }
.mode { width: 144px; margin-right: 3px; }
.mode select { height: 19px; padding: 0 3px; border-color: var(--blue); border-radius: 2px; }
.mode .drop { top: 7px; }
.canvas { flex: 1; min-height: 0; position: relative; margin-bottom: 2px; border: solid #c6c6c6; border-width: 1px 0 1px 1px; background: linear-gradient(#fbfbfb, #d3d3d3); }
.scene { position: absolute; inset: 0; width: 100%; height: 100%; }
.axis text { font: italic bold 22px var(--sans); }
.scene-tree {
  position: absolute;
  right: 34px;
  top: 33px;
  width: 216px;
  height: 209px;
  padding: 7px 11px;
  border: 1px solid #b8dcea;
  border-radius: 3px;
  background: rgba(244, 244, 244, .8);
  color: #6ba3bf;
  font: 10px/16px var(--sans);
}
.s0, .s1 { display: flex; align-items: center; gap: 3px; height: 17px; }
.s1 { padding-left: 14px; height: 18px; }
.scene-tree li { height: 23px; padding: 4px 0 0 46px; }
.scene-tree li:nth-child(even) { height: 24px; }
.grip { position: absolute; right: 1px; bottom: 1px; width: 8px; height: 8px; }
.solid {
  position: absolute;
  left: 9px;
  bottom: 6px;
  width: 179px;
  height: 24px;
  padding: 3px 7px;
  border: 1px solid #c3d9e2;
  border-radius: 3px;
  background: #e2e2e2;
  color: #a3bcc8;
  font: 10px/16px var(--sans);
}
.report {
  position: absolute;
  right: 25px;
  bottom: 0;
  display: flex;
  align-items: center;
  gap: 9px;
  height: 28px;
  padding: 0 8px;
  border: 0;
  border-radius: 2px 2px 0 0;
  background: #005f9b;
  color: #fff;
  font: 11px/16px Roboto, sans-serif;
  white-space: nowrap;
}
.report svg { width: 21px; height: 15px; }
```
